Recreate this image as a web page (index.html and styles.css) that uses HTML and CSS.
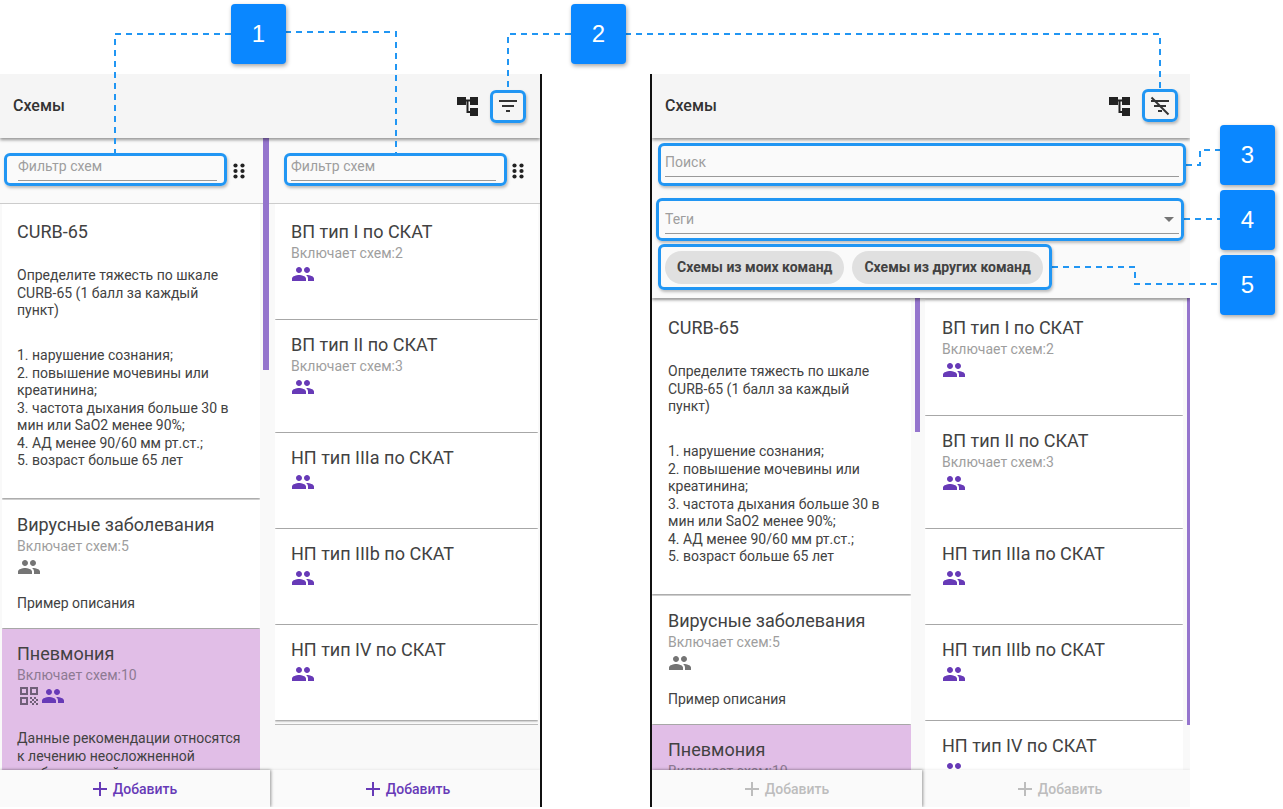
FILE: index.html
```html
<!DOCTYPE html>
<html lang="ru">
<head>
<meta charset="utf-8">
<title>Схемы</title>
<link rel="stylesheet" href="styles.css">
</head>
<body>
<svg width="0" height="0" class="defs">
  <symbol id="people" viewBox="0 0 24 24"><path d="M16 11c1.66 0 2.99-1.34 2.99-3S17.66 5 16 5c-1.66 0-3 1.34-3 3s1.34 3 3 3zm-8 0c1.66 0 2.99-1.34 2.99-3S9.66 5 8 5C6.34 5 5 6.34 5 8s1.34 3 3 3zm0 2c-2.33 0-7 1.17-7 3.5V19h14v-2.5c0-2.33-4.67-3.5-7-3.5zm8 0c-.29 0-.62.02-.97.05 1.16.84 1.97 1.97 1.97 3.45V19h6v-2.5c0-2.33-4.67-3.5-7-3.5z"/></symbol>
  <symbol id="qr" viewBox="0 0 24 24"><path d="M3 11h8V3H3v8zm2-6h4v4H5V5zM3 21h8v-8H3v8zm2-6h4v4H5v-4zM13 3v8h8V3h-8zm6 6h-4V5h4v4zM19 19h2v2h-2zM13 13h2v2h-2zM15 15h2v2h-2zM13 17h2v2h-2zM15 19h2v2h-2zM17 17h2v2h-2zM17 13h2v2h-2zM19 15h2v2h-2z"/></symbol>
  <symbol id="tree" viewBox="0 0 22 20"><path d="M0 1h9v8H0zM13 1h8v8h-8zM13 12h8v8h-8z"/><path d="M9 3.5h4v2h-1.5V15H13v2H9.5V5.5H9z"/></symbol>
  <symbol id="dots" viewBox="0 0 12 16"><circle cx="2.5" cy="2.5" r="2.1"/><circle cx="9.5" cy="2.5" r="2.1"/><circle cx="2.5" cy="8" r="2.1"/><circle cx="9.5" cy="8" r="2.1"/><circle cx="2.5" cy="13.5" r="2.1"/><circle cx="9.5" cy="13.5" r="2.1"/></symbol>
  <symbol id="plus" viewBox="0 0 14 14"><path d="M6 0h2v6h6v2H8v6H6V8H0V6h6z"/></symbol>
</svg>

<main class="stage">
  <section class="panel panel-left">
    <header class="bar">
      <h1 class="bar-title">Схемы</h1>
      <div class="bar-icons">
        <svg class="ic-tree"><use href="#tree"/></svg>
        <svg class="ic-filter" viewBox="0 0 24 24"><path d="M10 18h4v-2h-4v2zM3 6v2h18V6H3zm3 7h12v-2H6v2z"/></svg>
      </div>
    </header>
    <div class="cols">
      <div class="col col-a">
        <div class="filter-row">
          <div class="field"><span class="placeholder">Фильтр схем</span></div>
          <svg class="ic-dots"><use href="#dots"/></svg>
        </div>
        <div class="list">
          <article class="card first tall">
            <h2 class="card-title">CURB-65</h2>
            <p class="desc">Определите тяжесть по шкале CURB-65 (1 балл за каждый пункт)</p>
            <p class="desc gap">1. нарушение сознания;<br>2. повышение мочевины или креатинина;<br>3. частота дыхания больше 30 в мин или SaO2 менее 90%;<br>4. АД менее 90/60 мм рт.ст.;<br>5. возраст больше 65 лет</p>
          </article>
          <article class="card short">
            <h2 class="card-title">Вирусные заболевания</h2>
            <div class="sub">Включает схем:5</div>
            <div class="icons"><svg class="ic-people grey"><use href="#people"/></svg></div>
            <p class="desc near">Пример описания</p>
          </article>
          <article class="card selected">
            <h2 class="card-title">Пневмония</h2>
            <div class="sub">Включает схем:10</div>
            <div class="icons"><svg class="ic-qr"><use href="#qr"/></svg><svg class="ic-people"><use href="#people"/></svg></div>
            <p class="desc">Данные рекомендации относятся к лечению неосложненной внебольничной пневмонии</p>
          </article>
        </div>
        <div class="scroll scroll-a"></div>
      </div>
      <div class="col col-b">
        <div class="filter-row">
          <div class="field"><span class="placeholder">Фильтр схем</span></div>
          <svg class="ic-dots"><use href="#dots"/></svg>
        </div>
        <div class="list">
          <article class="card first"><h2 class="card-title">ВП тип I по СКАТ</h2><div class="sub">Включает схем:2</div><div class="icons"><svg class="ic-people"><use href="#people"/></svg></div></article>
          <article class="card second"><h2 class="card-title">ВП тип II по СКАТ</h2><div class="sub">Включает схем:3</div><div class="icons"><svg class="ic-people"><use href="#people"/></svg></div></article>
          <article class="card"><h2 class="card-title">НП тип IIIa по СКАТ</h2><div class="icons"><svg class="ic-people"><use href="#people"/></svg></div></article>
          <article class="card"><h2 class="card-title">НП тип IIIb по СКАТ</h2><div class="icons"><svg class="ic-people"><use href="#people"/></svg></div></article>
          <article class="card"><h2 class="card-title">НП тип IV по СКАТ</h2><div class="icons"><svg class="ic-people"><use href="#people"/></svg></div></article>
          <div class="list-end"></div>
        </div>
      </div>
    </div>
    <footer class="foot">
      <div class="add"><svg class="ic-plus"><use href="#plus"/></svg>Добавить</div>
      <div class="add add-b"><svg class="ic-plus"><use href="#plus"/></svg>Добавить</div>
    </footer>
  </section>

  <section class="panel panel-right">
    <header class="bar">
      <h1 class="bar-title">Схемы</h1>
      <div class="bar-icons">
        <svg class="ic-tree"><use href="#tree"/></svg>
        <svg class="ic-filter" viewBox="0 0 24 24"><path d="M10 18h4v-2h-4v2zM3 6v2h18V6H3zm3 7h12v-2H6v2z"/><path d="M3.5 3.5l17 17" class="slash"/></svg>
      </div>
    </header>
    <div class="search-area">
      <div class="wide-field search"><span class="placeholder">Поиск</span></div>
      <div class="wide-field tags"><span class="placeholder">Теги</span><span class="arrow"></span></div>
      <div class="chips">
        <span class="chip">Схемы из моих команд</span>
        <span class="chip">Схемы из других команд</span>
      </div>
    </div>
    <div class="cols">
      <div class="col col-a">
        <div class="list">
          <article class="card first tall">
            <h2 class="card-title">CURB-65</h2>
            <p class="desc">Определите тяжесть по шкале CURB-65 (1 балл за каждый пункт)</p>
            <p class="desc gap">1. нарушение сознания;<br>2. повышение мочевины или креатинина;<br>3. частота дыхания больше 30 в мин или SaO2 менее 90%;<br>4. АД менее 90/60 мм рт.ст.;<br>5. возраст больше 65 лет</p>
          </article>
          <article class="card short">
            <h2 class="card-title">Вирусные заболевания</h2>
            <div class="sub">Включает схем:5</div>
            <div class="icons"><svg class="ic-people grey"><use href="#people"/></svg></div>
            <p class="desc near">Пример описания</p>
          </article>
          <article class="card selected">
            <h2 class="card-title">Пневмония</h2>
            <div class="sub">Включает схем:10</div>
          </article>
        </div>
        <div class="scroll scroll-c"></div>
      </div>
      <div class="col col-b">
        <div class="list">
          <article class="card first"><h2 class="card-title">ВП тип I по СКАТ</h2><div class="sub">Включает схем:2</div><div class="icons"><svg class="ic-people"><use href="#people"/></svg></div></article>
          <article class="card second"><h2 class="card-title">ВП тип II по СКАТ</h2><div class="sub">Включает схем:3</div><div class="icons"><svg class="ic-people"><use href="#people"/></svg></div></article>
          <article class="card"><h2 class="card-title">НП тип IIIa по СКАТ</h2><div class="icons"><svg class="ic-people"><use href="#people"/></svg></div></article>
          <article class="card"><h2 class="card-title">НП тип IIIb по СКАТ</h2><div class="icons"><svg class="ic-people"><use href="#people"/></svg></div></article>
          <article class="card"><h2 class="card-title">НП тип IV по СКАТ</h2><div class="icons"><svg class="ic-people"><use href="#people"/></svg></div></article>
        </div>
        <div class="scroll scroll-d"></div>
      </div>
    </div>
    <footer class="foot disabled">
      <div class="add"><svg class="ic-plus"><use href="#plus"/></svg>Добавить</div>
      <div class="add add-b"><svg class="ic-plus"><use href="#plus"/></svg>Добавить</div>
    </footer>
  </section>
</main>

<svg class="leaders" viewBox="0 0 1283 809">
  <path d="M231 34H115V153M285 32H396V153M571 34H508V90M625 34H1160V89M1186 165H1200V150H1221M1184 219H1221M1052 267H1135V284H1221"/>
</svg>

<div class="hl hl-f1"></div>
<div class="hl hl-f2"></div>
<div class="hl hl-b1"></div>
<div class="hl hl-b2"></div>
<div class="hl hl-search"></div>
<div class="hl hl-tags"></div>
<div class="hl hl-chips"></div>

<div class="badge b1">1</div>
<div class="badge b2">2</div>
<div class="badge b3">3</div>
<div class="badge b4">4</div>
<div class="badge b5">5</div>
</body>
</html>
```
FILE: styles.css
```css
* { box-sizing: border-box; }
html, body { margin: 0; padding: 0; }
body {
  position: relative;
  width: 1283px;
  height: 809px;
  overflow: hidden;
  background: #fff;
  font-family: Roboto, "Liberation Sans", sans-serif;
  color: #424242;
}
.defs { position: absolute; }

.stage {
  display: flex;
  gap: 108px;
  padding-top: 74px;
  height: 807px;
}
.panel {
  display: flex;
  flex-direction: column;
  height: 733px;
  background: #f9f9f9;
  position: relative;
  z-index: 0;
  overflow: hidden;
}
.panel-left { width: 542px; border-right: 2px solid #111; }
.panel-right { width: 540px; border-left: 2px solid #111; }

.bar {
  flex: none;
  display: flex;
  align-items: center;
  justify-content: space-between;
  height: 64px;
  padding: 0 20px 0 13px;
  background: #f5f5f5;
  box-shadow: 0 2px 3px rgba(0, 0, 0, .4);
  position: relative;
  z-index: 2;
}
.panel-right .bar { padding-right: 18px; }
.bar-title { margin: -2px 0 0; font-size: 16px; font-weight: 500; color: #333; }
.bar-icons { display: flex; align-items: center; gap: 17px; margin-top: -1px; }
.ic-tree { width: 22px; height: 20px; fill: #222; }
.ic-filter { width: 24px; height: 24px; fill: #333; }
.slash { stroke: #333; stroke-width: 2; fill: none; }

.cols { flex: 1; min-height: 0; display: flex; }
.col { display: flex; flex-direction: column; position: relative; min-width: 0; overflow: hidden; }
.panel-left .col-a { width: 270px; padding-left: 2px; }
.panel-left .col-b { width: 270px; padding-left: 5px; padding-right: 2px; }
.panel-right .col-a { width: 270px; }
.panel-right .col-b { width: 268px; padding-left: 3px; }

.filter-row {
  flex: none;
  height: 66px;
  display: flex;
  align-items: flex-start;
  border-bottom: 1px solid #ccc;
  margin-left: -2px;
  padding-left: 18px;
  padding-top: 20px;
  background: #fafafa;
}
.col-b .filter-row { margin-left: -5px; margin-right: -2px; padding-left: 21px; }
.field {
  width: 199px;
  height: 23px;
  border-bottom: 1px solid #999;
  line-height: 16px;
}
.col-b .field { width: 205px; }
.placeholder { font-size: 14px; color: #9e9e9e; }
.ic-dots { width: 12px; height: 16px; fill: #222; margin: 5px 0 0 16px; }

.list { flex: 1; min-height: 0; overflow: hidden; }
.panel-left .col-a .list { width: 258px; }
.panel-right .col-a .list { width: 259px; padding-top: 2px; }
.panel-left .col-b .list { width: 263px; }
.panel-right .col-b .list { width: 258px; padding-top: 2px; }

.card {
  background: #fff;
  padding: 13px 16px 34px;
  margin-bottom: 1px;
  box-shadow: 0 1px 2px rgba(0, 0, 0, .45);
  position: relative;
}
.card.first { padding-top: 16px; padding-bottom: 33px; }
.card.second { padding-bottom: 33px; }
.panel-left .col-a .card { padding-left: 15px; padding-right: 18px; }
.panel-right .col-a .card { padding-right: 18px; }
.panel-right .col-b .card { padding-left: 17px; }
.card.tall { padding-bottom: 28px; margin-bottom: 2px; }
.card.short { padding-bottom: 16px; }
.card.selected { background: #e1bee7; }
.card-title { margin: 0; font-size: 18px; font-weight: 400; line-height: 24px; color: #424242; }
.sub { font-size: 14px; line-height: 18px; color: #9e9e9e; }
.selected .sub { color: #8d7a93; }
.icons { display: flex; height: 24px; }
.ic-people { width: 24px; height: 24px; fill: #673ab7; }
.ic-people.grey { fill: #757575; }
.ic-qr { width: 24px; height: 24px; fill: #6f5f78; }
.desc { margin: 22px 0 0; font-size: 14px; line-height: 17.5px; color: #424242; }
.desc.gap { margin-top: 27.5px; }
.desc.near { margin-top: 16px; }
.first > .desc:nth-of-type(1) { margin-top: 23px; }
.list-end { height: 1px; margin: 4px -5px 0; background: #bbb; }

.scroll { position: absolute; background: #9575cd; }
.scroll-a { left: 263px; top: 0; width: 6px; height: 232px; }
.scroll-c { left: 263px; top: 0; width: 5px; height: 134px; }
.scroll-d { right: 0; top: 0; width: 3px; height: 427px; }

.search-area {
  flex: none;
  height: 160px;
  padding: 0 11px 0 13px;
  background: #fafafa;
  box-shadow: 0 2px 3px rgba(0, 0, 0, .4);
  position: relative;
  z-index: 1;
}
.wide-field {
  position: relative;
  width: 514px;
  border-bottom: 1px solid #999;
}
.search { height: 39px; padding-top: 15px; line-height: 18px; }
.tags { height: 39px; margin-top: 18px; padding-top: 15px; line-height: 18px; }
.arrow {
  position: absolute;
  right: 5px;
  top: 22px;
  border: 5px solid transparent;
  border-top-color: #757575;
  border-bottom: 0;
}
.chips { display: flex; gap: 8px; margin-top: 17px; }
.chip {
  height: 33px;
  line-height: 33px;
  padding: 0 12px;
  border-radius: 17px;
  background: #e0e0e0;
  font-size: 14px;
  font-weight: 700;
  color: #424242;
  white-space: nowrap;
}

.foot {
  flex: none;
  height: 37px;
  display: flex;
  background: #fafafa;
  position: relative;
  z-index: 3;
  box-shadow: 0 -1px 2px rgba(0, 0, 0, .06);
}
.add {
  width: 270px;
  display: flex;
  align-items: center;
  justify-content: center;
  gap: 6px;
  font-size: 14px;
  font-weight: 500;
  color: #673ab7;
  fill: #673ab7;
  box-shadow: 1px 0 3px rgba(0, 0, 0, .4);
}
.add-b { padding-left: 6px; box-shadow: none; }
.panel-right .add-b { width: 268px; padding-left: 8px; }
.ic-plus { width: 14px; height: 14px; flex: none; }
.disabled .add { color: #bdbdbd; fill: #bdbdbd; }

.leaders {
  position: absolute;
  left: 0;
  top: 0;
  width: 1283px;
  height: 809px;
  fill: none;
  stroke: #2196f3;
  stroke-width: 2;
  stroke-dasharray: 6 5;
  pointer-events: none;
}

.hl {
  position: absolute;
  border: 3px solid #2196f3;
  border-radius: 6px;
  box-shadow: 1px 2px 3px rgba(0, 0, 0, .25);
}
.hl-f1 { left: 4px; top: 153px; width: 223px; height: 33px; }
.hl-f2 { left: 284px; top: 153px; width: 223px; height: 33px; }
.hl-b1 { left: 490px; top: 90px; width: 36px; height: 33px; }
.hl-b2 { left: 1142px; top: 89px; width: 36px; height: 33px; }
.hl-search { left: 658px; top: 143px; width: 528px; height: 43px; }
.hl-tags { left: 656px; top: 198px; width: 528px; height: 43px; }
.hl-chips { left: 658px; top: 244px; width: 394px; height: 46px; }

.badge {
  position: absolute;
  width: 55px;
  height: 60px;
  display: flex;
  align-items: center;
  justify-content: center;
  background: #0a87ff;
  border-radius: 4px;
  box-shadow: 1px 2px 4px rgba(0, 0, 0, .35);
  color: #fff;
  font-family: "Liberation Sans", Arial, sans-serif;
  font-size: 24px;
}
.b1 { left: 231px; top: 4px; }
.b2 { left: 571px; top: 4px; }
.b3 { left: 1220px; top: 125px; }
.b4 { left: 1220px; top: 190px; }
.b5 { left: 1220px; top: 255px; }
```
